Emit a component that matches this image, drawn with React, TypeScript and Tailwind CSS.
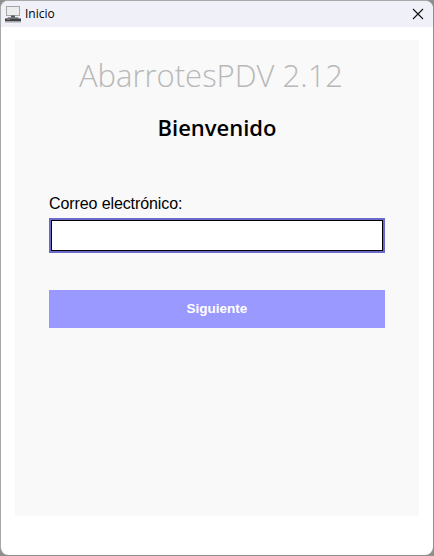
function AppIcon() {
  return (
    <svg width="16" height="17" viewBox="0 0 16 17" className="shrink-0">
      <rect x="1.5" y="0.5" width="13" height="9" fill="#eceded" stroke="#a3a5a8" />
      <path d="M6 9.5h4v2H6z" fill="#54575b" />
      <path d="M3 11.5h10l1 1H2z" fill="#3f4246" />
      <rect x="0" y="12.5" width="16" height="2.5" fill="#3f4246" />
      <rect x="2" y="13" width="3" height="1" fill="#b5674f" />
      <rect x="0" y="15" width="16" height="1.5" fill="#a3a6aa" />
    </svg>
  );
}

export default function App() {
  return (
    <div className="w-[434px] h-[556px] bg-[#8f8f8f] overflow-hidden">
      <div className="w-[433px] h-[555px] flex flex-col bg-white rounded-lg border-t border-l border-[#a8a8a8] overflow-hidden font-['Liberation_Sans',sans-serif]">
        <div className="h-[26px] shrink-0 flex items-center justify-between bg-[#f0f1f8] pl-[4px] pr-[9px]">
          <div className="flex items-center gap-[4px]">
            <AppIcon />
            <span className="text-[12px] text-black font-['Open_Sans',sans-serif]">Inicio</span>
          </div>
          <svg width="12" height="12" viewBox="0 0 12 12" fill="none" stroke="#111" strokeWidth="1.1">
            <path d="M1 1l10 10M11 1L1 11" />
          </svg>
        </div>
        <div className="flex-1 pt-[13px] pl-[14px]">
          <div className="w-[404px] h-[476px] bg-[#f9f9f9] flex flex-col">
            <div className="h-[40px] mt-[15px] pr-[12px] text-center text-[31px] leading-[40px] font-light text-[#b8b8b8] font-['Open_Sans',sans-serif] whitespace-nowrap">
              AbarrotesPDV 2.12
            </div>
            <div className="mt-[17px] text-center text-[22px] leading-[30px] font-semibold text-black font-['Open_Sans',sans-serif]">
              Bienvenido
            </div>
            <div className="px-[34px]">
              <label className="block mt-[52px] text-[16px] leading-[20px] tracking-[-0.1px] text-black">Correo electrónico:</label>
              <div className="mt-[4px] h-[35px] border-2 border-[#6a6acb]">
                <input className="block w-full h-full bg-white border border-black outline-none" />
              </div>
              <button className="block w-full h-[38px] mt-[37px] bg-[#9999ff] text-white text-[13.5px] font-bold">
                Siguiente
              </button>
            </div>
          </div>
        </div>
      </div>
    </div>
  );
}
